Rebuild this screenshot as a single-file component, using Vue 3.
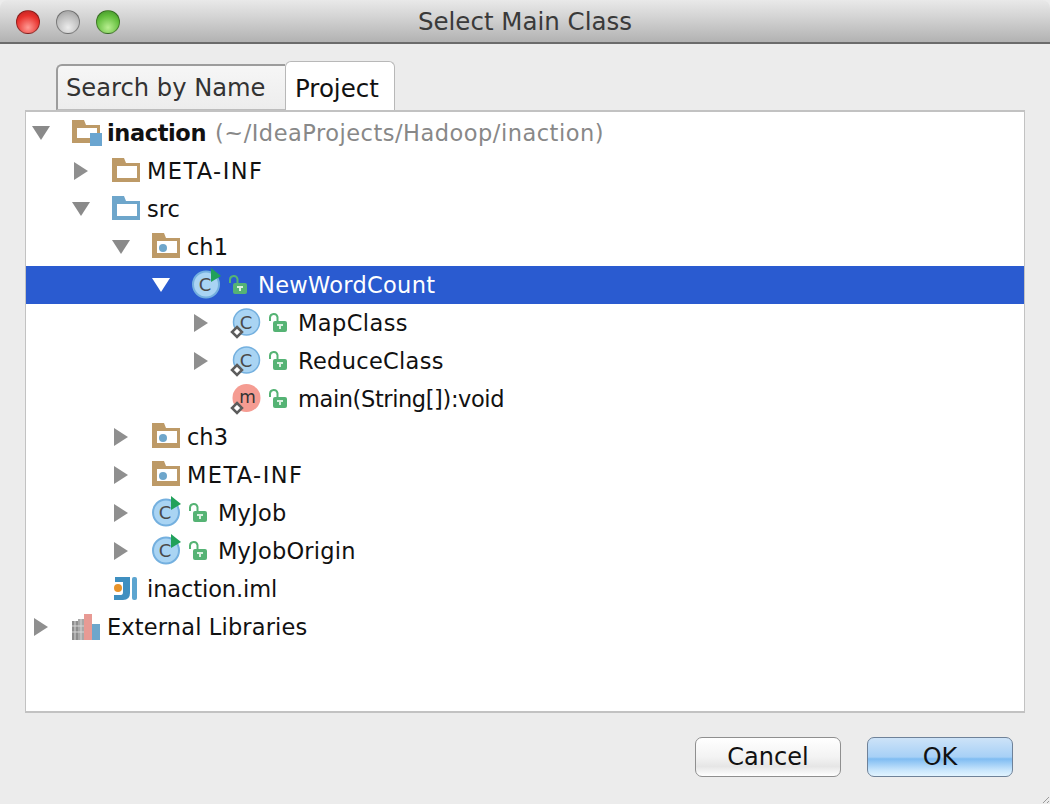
<script setup>
const rows = [
  { depth: 0, arrow: 'down', icon: 'module', name: 'inaction', path: '(~/IdeaProjects/Hadoop/inaction)', ls: -0.4 },
  { depth: 1, arrow: 'right', icon: 'folder', name: 'META-INF', ls: 1.4 },
  { depth: 1, arrow: 'down', icon: 'src', name: 'src' },
  { depth: 2, arrow: 'down', icon: 'pkg', name: 'ch1' },
  { depth: 3, arrow: 'down', icon: 'runclass', lock: true, name: 'NewWordCount', selected: true, ls: 0.3 },
  { depth: 4, arrow: 'right', icon: 'innerclass', lock: true, name: 'MapClass', ls: 0.4 },
  { depth: 4, arrow: 'right', icon: 'innerclass', lock: true, name: 'ReduceClass', ls: 0.3 },
  { depth: 4, arrow: '', icon: 'method', lock: true, name: 'main(String[]):void', ls: -0.4 },
  { depth: 2, arrow: 'right', icon: 'pkg', name: 'ch3' },
  { depth: 2, arrow: 'right', icon: 'pkg', name: 'META-INF', ls: 1.4 },
  { depth: 2, arrow: 'right', icon: 'runclass', lock: true, name: 'MyJob', ls: 0.2 },
  { depth: 2, arrow: 'right', icon: 'runclass', lock: true, name: 'MyJobOrigin', ls: 0.2 },
  { depth: 1, arrow: '', icon: 'iml', name: 'inaction.iml', ls: -0.1 },
  { depth: 0, arrow: 'right', icon: 'libs', name: 'External Libraries', ls: 0.15 },
]
</script>

<template>
  <div class="window">
    <header class="titlebar">
      <div class="lights">
        <span class="light red"></span>
        <span class="light grey"></span>
        <span class="light green"></span>
      </div>
      <span class="title">Select Main Class</span>
    </header>

    <div class="tabs">
      <div class="tab">Search by Name</div>
      <div class="tab active">Project</div>
    </div>

    <div class="tree">
      <div
        v-for="row in rows"
        :key="row.name + row.depth"
        class="row"
        :class="{ selected: row.selected }"
        :style="{ paddingLeft: row.depth * 40 + 'px' }"
      >
        <span class="arrow-slot">
          <svg v-if="row.arrow === 'down'" width="20" height="16" viewBox="0 0 20 16">
            <path d="M1 1H19L10 15Z" :fill="row.selected ? '#fff' : '#8a8a8a'" />
          </svg>
          <svg v-else-if="row.arrow === 'right'" width="16" height="20" viewBox="0 0 16 20">
            <path d="M1 1V19L15 10Z" fill="#8f8f8f" />
          </svg>
        </span>

        <svg class="icon" width="30" height="30" viewBox="0 0 30 30">
          <template v-if="row.icon === 'module'">
            <path d="M0 2H12L14 7H28V25H0Z" fill="#bd9a67" />
            <rect x="5" y="10" width="20" height="10" fill="#fff" />
            <rect x="18" y="15" width="12" height="13" fill="#6aa5d0" />
          </template>
          <template v-else-if="row.icon === 'folder'">
            <path d="M0 2H12L14 7H28V26H0Z" fill="#bd9a67" />
            <rect x="5" y="10" width="20" height="12" fill="#fff" />
          </template>
          <template v-else-if="row.icon === 'src'">
            <path d="M0 2H12L14 7H28V26H0Z" fill="#6ea6cb" />
            <rect x="5" y="10" width="20" height="12" fill="#fff" />
          </template>
          <template v-else-if="row.icon === 'pkg'">
            <path d="M0 1H12L14 6H28V26H0Z" fill="#bd9a67" />
            <rect x="5" y="9" width="20" height="12" fill="#fff" />
            <circle cx="11" cy="16" r="4" fill="#6ea6cb" />
          </template>
          <template v-else-if="row.icon === 'runclass'">
            <circle cx="14" cy="14.500" r="13" fill="#a9d4f3" stroke="#74b0df" stroke-width="2" />
            <text x="13" y="21" class="glyph" text-anchor="middle">C</text>
            <path d="M19 -2L29 6L19 12Z" fill="#21a15a" />
          </template>
          <template v-else-if="row.icon === 'innerclass'">
            <circle cx="14.500" cy="14" r="13" fill="#a9d4f3" stroke="#74b0df" stroke-width="1.500" />
            <text x="14" y="21" class="glyph" text-anchor="middle">C</text>
            <path d="M5 19L10 24L5 29L0 24Z" fill="#fff" stroke="#5c5c5c" stroke-width="2.500" />
          </template>
          <template v-else-if="row.icon === 'method'">
            <circle cx="14.500" cy="14" r="14" fill="#f59c92" />
            <text x="15.500" y="19" class="glyph m" text-anchor="middle">m</text>
            <path d="M5 19L10 24L5 29L0 24Z" fill="#fff" stroke="#5c5c5c" stroke-width="2.500" />
          </template>
          <template v-else-if="row.icon === 'iml'">
            <path d="M3 3H18V19Q18 26 11 26H2V21H9Q11 21 11 18V8H3Z" fill="#3f8fc0" />
            <circle cx="6" cy="14" r="4" fill="#e8932a" />
            <rect x="20" y="3" width="5" height="23" rx="2" fill="#5da5d0" />
          </template>
          <template v-else-if="row.icon === 'libs'">
            <rect x="0" y="9" width="6" height="19" fill="#8d8d8d" />
            <rect x="6" y="7" width="6" height="21" fill="#a8a8a8" />
            <path d="M0 14H12M0 20H12M3 9V28M9 7V28" stroke="#d6d6d6" stroke-width="1" />
            <rect x="12" y="2" width="8" height="26" fill="#e89a94" />
            <rect x="20" y="12" width="8" height="16" fill="#6ea6cb" />
          </template>
        </svg>

        <svg v-if="row.lock" class="lock" width="20" height="20" viewBox="0 0 20 20">
          <path d="M2 8V4.500A3.800 3.800 0 0 1 9.500 4V8" fill="none" stroke="#55b374" stroke-width="2" />
          <rect x="5" y="8" width="14" height="11" rx="2" fill="#55b374" />
          <path d="M9 12H15M12 12V16" stroke="#d8f0df" stroke-width="2" />
        </svg>

        <span
          class="label"
          :class="{ bold: row.path }"
          :style="{ letterSpacing: (row.ls || 0) + 'px' }"
        >{{ row.name }}</span>
        <span v-if="row.path" class="path">{{ row.path }}</span>
      </div>
    </div>

    <footer class="footer">
      <button class="btn">Cancel</button>
      <button class="btn primary">OK</button>
    </footer>
    <svg class="grip" width="10" height="10" viewBox="0 0 10 10">
      <path d="M9 3L3 9M9 7L7 9" stroke="#9a9a9a" stroke-width="1" />
    </svg>
  </div>
</template>

<style scoped>
.window {
  position: relative;
  width: 1050px;
  height: 804px;
  background: #ececec;
  font-family: "DejaVu Sans", sans-serif;
  overflow: hidden;
}
.titlebar {
  position: relative;
  height: 42px;
  display: flex;
  align-items: center;
  justify-content: center;
  background: linear-gradient(#e9e9e9, #d4d4d4 40%, #b2b2b2);
  border-bottom: 2px solid #6b6b6b;
  border-radius: 8px 8px 0 0;
}
.title {
  font-size: 24.500px;
  color: #3a3a3a;
}
.lights {
  position: absolute;
  left: 16px;
  top: 10px;
  display: flex;
  gap: 16px;
}
.light {
  width: 24px;
  height: 24px;
  border-radius: 50%;
  box-sizing: border-box;
  border: 1px solid rgba(0, 0, 0, 0.35);
}
.red { background: radial-gradient(circle at 50% 75%, #ff9a94, #e8312c 60%, #b02020); }
.grey { background: radial-gradient(circle at 50% 75%, #ececec, #bcbcbc 60%, #969696); }
.green { background: radial-gradient(circle at 50% 75%, #b8ee90, #62bd3c 60%, #3d8a28); }

.tabs {
  display: flex;
  align-items: flex-end;
  height: 49px;
  margin: 17px 0 0 56px;
  position: relative;
  z-index: 1;
}
.tab {
  box-sizing: border-box;
  height: 46px;
  width: 229px;
  padding-left: 8px;
  display: flex;
  align-items: center;
  font-size: 24.200px;
  color: #333;
  background: linear-gradient(#f6f6f6, #ededed);
  border: 2px solid #9c9c9c;
  border-bottom: 1px solid #bdbdbd;
  border-right: none;
  border-radius: 6px 0 0 0;
}
.tab.active {
  width: 110px;
  height: 49px;
  padding: 4px 0 0 9px;
  font-size: 24.500px;
  color: #111;
  background: #fff;
  border: 1px solid #b8b8b8;
  border-bottom: none;
  border-radius: 6px 6px 0 0;
}
.tree {
  box-sizing: border-box;
  height: 603px;
  margin: 0 25px;
  padding-top: 2px;
  background: #fff;
  border: 2px solid #c2c2c2;
  border-left-width: 1px;
  border-right-width: 1px;
}
.row {
  height: 38px;
  display: flex;
  align-items: center;
  color: #111;
  font-size: 22.500px;
  white-space: nowrap;
}
.row.selected {
  background: #2a5bd0;
  color: #fff;
}
.arrow-slot {
  width: 30px;
  flex: none;
  display: flex;
  justify-content: center;
  margin-right: 16px;
}
.icon {
  flex: none;
  margin-right: 5px;
  overflow: visible;
}
.lock {
  flex: none;
  margin: 0 10px 0 1px;
}
.bold { font-weight: 700; }
.path {
  margin-left: 9px;
  color: #888;
  letter-spacing: 0.5px;
}
.glyph {
  font-family: "DejaVu Sans", sans-serif;
  font-size: 18px;
  fill: #4a4a4a;
}
.glyph.m { font-size: 17px; fill: #333; }
.footer {
  display: flex;
  justify-content: flex-end;
  gap: 26px;
  padding: 24px 37px 0 0;
}
.btn {
  box-sizing: border-box;
  width: 146px;
  height: 40px;
  font-family: inherit;
  font-size: 24px;
  color: #111;
  border: 1px solid #8f8f8f;
  border-radius: 7px;
  background: linear-gradient(#fff, #f3f3f3 50%, #e6e6e6 75%, #fff);
  padding: 0;
}
.btn.primary {
  border-color: #6f8299;
  background: linear-gradient(#cde3f8, #a7d0f6 50%, #7fbcf2 55%, #c9e6fc 85%, #e2f4ff);
}
.grip {
  position: absolute;
  right: 0;
  bottom: 0;
}
</style>
